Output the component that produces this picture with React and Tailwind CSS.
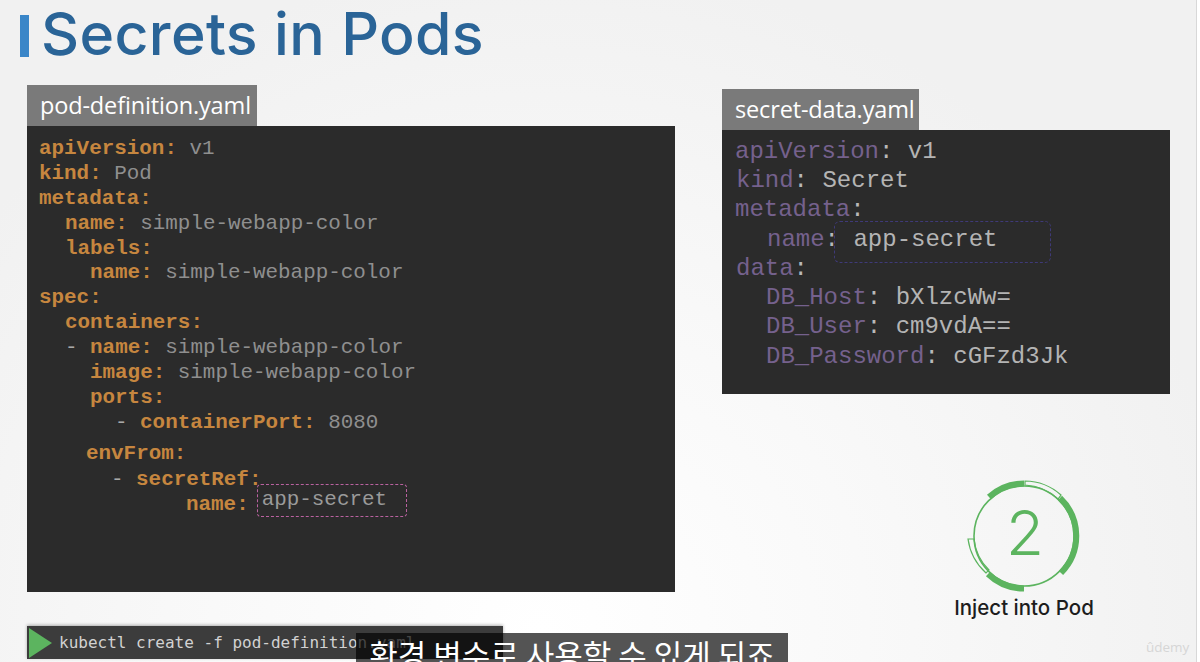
const mono = "font-['Liberation_Mono',monospace]"

const podLines = [
  { x: 12, key: 'apiVersion', value: 'v1' },
  { x: 12, key: 'kind', value: 'Pod' },
  { x: 12, key: 'metadata' },
  { x: 38, key: 'name', value: 'simple-webapp-color' },
  { x: 38, key: 'labels' },
  { x: 63, key: 'name', value: 'simple-webapp-color' },
  { x: 12, key: 'spec' },
  { x: 38, key: 'containers' },
  { x: 38, dash: true, key: 'name', value: 'simple-webapp-color' },
  { x: 63, key: 'image', value: 'simple-webapp-color' },
  { x: 63, key: 'ports' },
  { x: 88, dash: true, key: 'containerPort', value: '8080' },
  { x: 59, key: 'envFrom', gap: 6 },
  { x: 84, dash: true, key: 'secretRef', gap: 1 },
]

const secretLines = [
  { x: 13, key: 'apiVersion', value: 'v1' },
  { x: 14, key: 'kind', value: 'Secret' },
  { x: 13, key: 'metadata' },
  { x: 45, key: 'name', value: 'app-secret' },
  { x: 14, key: 'data' },
  { x: 44, key: 'DB_Host', value: 'bXlzcWw=' },
  { x: 44, key: 'DB_User', value: 'cm9vdA==' },
  { x: 44, key: 'DB_Password', value: 'cGFzd3Jk' },
]

function PodLine({ line }) {
  return (
    <div className="flex h-[24.900px] items-center whitespace-pre" style={{ paddingLeft: line.x, marginTop: line.gap || 0 }}>
      {line.dash && <span className="text-[#a8a8a8]">- </span>}
      <span className="font-bold text-[#c6863f]">{line.key}:</span>
      {line.value && <span className="text-[#8f8f8f]"> {line.value}</span>}
    </div>
  )
}

function Ring() {
  return (
    <svg width="120" height="120" viewBox="-60 -60 120 120" fill="none" className="text-[#5cb45f]">
      <circle r="50" stroke="currentColor" strokeWidth="1.6" />
      <path d="M0 -52.500 A52.500 52.500 0 0 0 -35 -39" stroke="currentColor" strokeWidth="6" />
      <path d="M36 -38 A52.500 52.500 0 0 1 37 37" stroke="currentColor" strokeWidth="6" />
      <path d="M0 52.500 A52.500 52.500 0 0 1 -36 38" stroke="currentColor" strokeWidth="6" />
      <path d="M1 -51 L1 -55 A55 55 0 0 1 37 -41 L34 -37 A51 51 0 0 0 1 -51 Z" stroke="currentColor" strokeWidth="1.200" />
      <path d="M-50 3 L-56 3 A56 56 0 0 0 -38 37 L-35 34 A51 51 0 0 1 -50 3 Z" stroke="currentColor" strokeWidth="1.200" />
      <text x="1" y="19" textAnchor="middle" fontSize="62" fontFamily="Inter, sans-serif" fontWeight="300" fill="currentColor">2</text>
    </svg>
  )
}

export default function App() {
  return (
    <div className="relative h-[662px] w-[1200px] overflow-hidden bg-[#f2f2f2] bg-[radial-gradient(ellipse_at_45%_95%,#ffffff_0%,#f9f9f9_35%,#f1f1f1_75%)]">
      <div className="absolute top-0 right-0 h-full w-[4px] border-l border-[#d8d8d8] bg-white" />

      <header className="flex h-[85px] items-start pl-[20px] pt-[3px]">
        <div className="mt-[12px] h-[42px] w-[9px] bg-[#3a86c8]" />
        <h1 className="ml-[12px] font-['Inter',sans-serif] text-[59px] leading-[62px] font-medium tracking-[0.35px] whitespace-nowrap text-[#2a6497]">
          Secrets in Pods
        </h1>
      </header>

      <div className="flex items-start pl-[27px]">
        <div className="w-[648px]">
          <div className="flex h-[41px] w-[230px] items-center bg-[#7a7a7a] pl-[13px] font-['Open_Sans',sans-serif] text-[23.500px] tracking-[-0.15px] whitespace-nowrap text-white">
            pod-definition.yaml
          </div>
          <div className={`h-[466px] bg-[#2b2b2b] pt-[11px] text-[20.900px] leading-none ${mono}`}>
            {podLines.map((line, i) => (
              <PodLine key={i} line={line} />
            ))}
            <div className="flex h-[25px] items-center whitespace-pre pl-[159px]">
              <span className="font-bold text-[#c6863f]">name:</span>
              <span className="ml-[8px] -mt-[8px] flex h-[33px] w-[150px] items-center rounded-[4px] border border-dashed border-[#b9629f] pb-[1px] pl-[4px] text-[#9a9a9a]">
                app-secret
              </span>
            </div>
          </div>
          <div className="mt-[34px] flex h-[33px] w-[476px] items-center bg-[#3c3c3c] shadow-[0_-1px_3px_rgba(0,0,0,0.3)]">
            <svg width="25" height="30" viewBox="0 0 25 30" className="ml-[2px] shrink-0">
              <path d="M0 0 L23 15 L0 30 Z" fill="#5cb45f" />
            </svg>
            <span className="ml-[5px] font-['DejaVu_Sans_Mono',monospace] text-[16px] whitespace-nowrap text-[#d2d2d2]">
              kubectl create -f pod-definition.yaml
            </span>
          </div>
        </div>

        <div className="ml-[47px] flex w-[448px] flex-col pt-[4px]">
          <div className="flex h-[41px] w-[197px] items-center bg-[#7a7a7a] pl-[13px] font-['Open_Sans',sans-serif] text-[23.500px] tracking-[-0.15px] whitespace-nowrap text-white">
            secret-data.yaml
          </div>
          <div className={`relative h-[264px] bg-[#2b2b2b] pt-[7px] text-[24px] leading-none ${mono}`}>
            {secretLines.map((line, i) => (
              <div key={i} className="flex h-[29.300px] items-center whitespace-pre" style={{ paddingLeft: line.x }}>
                <span className="text-[#75618d]">{line.key}</span>
                <span className="text-[#b9b9b9]">:</span>
                {line.value && <span className="text-[#b4b4b4]"> {line.value}</span>}
              </div>
            ))}
            <div className="absolute top-[91px] left-[112px] h-[42px] w-[217px] rounded-[6px] border border-dashed border-[#3f3a78]" />
          </div>
          <div className="mt-[82px] ml-[242px] flex w-[120px] flex-col items-center">
            <Ring />
            <div className="font-['Inter',sans-serif] text-[20.500px] leading-[24px] font-medium whitespace-nowrap text-[#1d1d1d]">
              Inject into Pod
            </div>
          </div>
        </div>
      </div>

      <div className="absolute top-[633px] left-[356px] h-[60px] w-[432px] bg-[rgba(0,0,0,0.67)] pt-[1px] text-center font-['Noto_Sans_CJK_KR',sans-serif] text-[31px] leading-[40px] whitespace-nowrap text-white">
        환경 변수로 사용할 수 있게 되죠
      </div>
      <div className="absolute top-[637px] left-[1146px] font-['Open_Sans',sans-serif] text-[13.500px] text-[#d6d6d6]">
        ûdemy
      </div>
    </div>
  )
}
